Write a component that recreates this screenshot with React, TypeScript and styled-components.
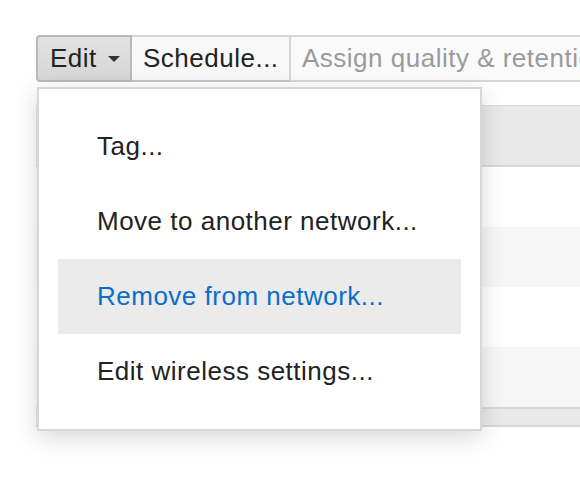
import React from 'react';
import styled, { createGlobalStyle } from 'styled-components';

const GlobalStyle = createGlobalStyle`
  body {
    margin: 0;
    background: #ffffff;
    font-family: "Liberation Sans", Arial, Helvetica, sans-serif;
    color: #222222;
  }
`;

interface MenuEntry {
  label: string;
  active?: boolean;
}

const entries: MenuEntry[] = [
  { label: 'Tag...' },
  { label: 'Move to another network...' },
  { label: 'Remove from network...', active: true },
  { label: 'Edit wireless settings...' },
];

const rows = [false, true, false, true];

const App: React.FC = () => {
  return (
    <Page>
      <GlobalStyle />
      <Toolbar>
        <EditButton>
          Edit
          <Caret />
        </EditButton>
        <ToolButton>Schedule...</ToolButton>
        <ToolButton disabled>Assign quality &amp; retention</ToolButton>
        <Menu>
          {entries.map((entry) => (
            <MenuItem key={entry.label} $active={entry.active}>
              {entry.label}
            </MenuItem>
          ))}
        </Menu>
      </Toolbar>
      <Table>
        <HeaderRow />
        {rows.map((striped, index) => (
          <Row key={index} $striped={striped} />
        ))}
        <FooterRow />
      </Table>
    </Page>
  );
};

export default App;

const Page = styled.div`
  width: 580px;
  height: 480px;
  overflow: hidden;
  padding: 35px 0 0 36px;
  box-sizing: border-box;
`;

const Toolbar = styled.div`
  position: relative;
  display: flex;
  height: 47px;
  width: 700px;
  font-size: 26px;
  letter-spacing: 0.5px;
`;

const EditButton = styled.div`
  display: flex;
  align-items: center;
  gap: 11px;
  width: 96px;
  box-sizing: border-box;
  padding-left: 12px;
  color: #222;
  background: linear-gradient(#e2e2e2, #d6d6d6);
  border: 2px solid #b9b9b9;
  border-radius: 4px 0 0 4px;
`;

const Caret = styled.span`
  width: 0;
  height: 0;
  border-left: 6px solid transparent;
  border-right: 6px solid transparent;
  border-top: 6px solid #333;
`;

const ToolButton = styled.div<{ disabled?: boolean }>`
  display: flex;
  align-items: center;
  padding: 0 11px;
  white-space: nowrap;
  color: ${(p) => (p.disabled ? '#9a9a9a' : '#222')};
  background: ${(p) => (p.disabled ? '#fafafa' : '#f8f8f8')};
  border: 2px solid #d6d6d6;
  border-left: none;
  border-bottom-color: ${(p) => (p.disabled ? '#d6d6d6' : '#c4c4c4')};
  &:nth-child(2) {
    width: 159px;
    box-sizing: border-box;
  }
`;

const Menu = styled.div`
  position: absolute;
  top: calc(100% + 5px);
  left: 1px;
  z-index: 2;
  width: 445px;
  box-sizing: border-box;
  padding: 20px 19px;
  background: #ffffff;
  border: 2px solid #d7d7d7;
  box-shadow: 0 6px 22px rgba(0, 0, 0, 0.16);
`;

const MenuItem = styled.div<{ $active?: boolean }>`
  display: flex;
  align-items: center;
  height: 75px;
  padding-left: 39px;
  color: ${(p) => (p.$active ? '#0a6fc8' : '#222')};
  background: ${(p) => (p.$active ? '#ebebeb' : 'transparent')};
`;

const Table = styled.div`
  display: flex;
  flex-direction: column;
  margin-top: 23px;
  width: 700px;
`;

const HeaderRow = styled.div`
  height: 59px;
  background: #e9e9e9;
  border-top: 1px solid #dcdcdc;
  border-bottom: 2px solid #dadada;
`;

const Row = styled.div<{ $striped?: boolean }>`
  height: 60px;
  background: ${(p) => (p.$striped ? '#f6f6f6' : '#ffffff')};
`;

const FooterRow = styled.div`
  height: 16px;
  background: #e9e9e9;
  border-top: 2px solid #d8d8d8;
  border-bottom: 2px solid #d8d8d8;
`;
